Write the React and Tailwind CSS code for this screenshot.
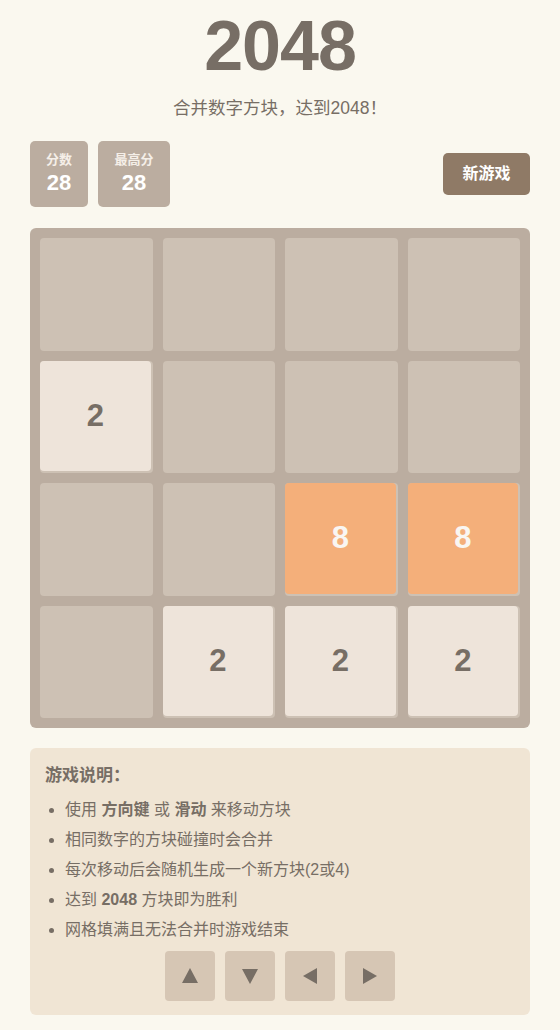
import React, { useState } from 'react';

const board = [
  [0, 0, 0, 0],
  [2, 0, 0, 0],
  [0, 0, 8, 8],
  [0, 2, 2, 2],
];

function Tile({ value }) {
  if (!value) {
    return <div className="bg-[#cdc1b4] rounded-[4px] h-full" />;
  }
  const style =
    value === 2
      ? 'bg-[#eee4da] text-[#776e65]'
      : 'bg-[#f4af7a] text-[#f9f6f2]';
  return (
    <div className="bg-[#cdc1b4] rounded-[4px] h-full">
      <div
        className={`w-[calc(100%-2px)] h-[calc(100%-2px)] rounded-[4px] flex items-center justify-center text-[31px] font-bold ${style}`}
      >
        {value}
      </div>
    </div>
  );
}

function Arrow({ dir }) {
  const points = {
    up: '9,1 17,16 1,16',
    down: '1,2 17,2 9,17',
    left: '16,1 16,17 2,9',
    right: '2,1 2,17 16,9',
  }[dir];
  return (
    <button className="w-[50px] h-[50px] bg-[#d6c6b4] rounded-[4px] flex items-center justify-center">
      <svg width="18" height="18" viewBox="0 0 18 18">
        <polygon points={points} fill="#776e65" />
      </svg>
    </button>
  );
}

export default function App() {
  const [score] = useState(28);
  const [best] = useState(28);

  return (
    <div className="min-h-screen bg-[#faf8ef] font-['Liberation_Sans','Noto_Sans_CJK_SC',sans-serif] text-[#776e65]">
      <div className="w-[500px] mx-auto pt-[11px] pb-4">
        {/* Header */}
        <h1 className="text-[70px] leading-[70px] font-bold text-center tracking-[-1px]">2048</h1>
        <p className="mt-[15px] text-[17.5px] leading-[24px] text-center">合并数字方块，达到2048！</p>

        {/* Scores */}
        <div className="mt-[21px] flex items-center justify-between">
          <div className="flex gap-[10px]">
            <div className="w-[58px] h-[66px] bg-[#bbada0] rounded-[5px] flex flex-col items-center pt-[10px] text-white font-bold">
              <span className="text-[13px] leading-[18px] text-[#f5efe8]">分数</span>
              <span className="text-[22px] leading-[28px]">{score}</span>
            </div>
            <div className="w-[72px] h-[66px] bg-[#bbada0] rounded-[5px] flex flex-col items-center pt-[10px] text-white font-bold">
              <span className="text-[13px] leading-[18px] text-[#f5efe8]">最高分</span>
              <span className="text-[22px] leading-[28px]">{best}</span>
            </div>
          </div>
          <button className="w-[87px] h-[42px] bg-[#8f7a66] rounded-[5px] text-white font-bold text-[16px]">
            新游戏
          </button>
        </div>

        {/* Board */}
        <div className="mt-[21px] w-[500px] h-[500px] bg-[#bbada0] rounded-[6px] p-[10px] grid grid-cols-4 grid-rows-4 gap-[10px]">
          {board.flat().map((v, i) => (
            <Tile key={i} value={v} />
          ))}
        </div>

        {/* Instructions */}
        <div className="mt-5 bg-[#f0e5d4] rounded-[6px] px-[15px] pt-[15px] pb-[14px]">
          <h3 className="text-[17px] leading-[26px] font-bold">游戏说明：</h3>
          <ul className="mt-[6px] list-disc pl-5 text-[16px] leading-[30px]">
            <li>
              使用 <b>方向键</b> 或 <b>滑动</b> 来移动方块
            </li>
            <li>相同数字的方块碰撞时会合并</li>
            <li>每次移动后会随机生成一个新方块(2或4)</li>
            <li>
              达到 <b>2048</b> 方块即为胜利
            </li>
            <li>网格填满且无法合并时游戏结束</li>
          </ul>
          <div className="mt-[6px] flex justify-center gap-[10px]">
            <Arrow dir="up" />
            <Arrow dir="down" />
            <Arrow dir="left" />
            <Arrow dir="right" />
          </div>
        </div>
      </div>
    </div>
  );
}
